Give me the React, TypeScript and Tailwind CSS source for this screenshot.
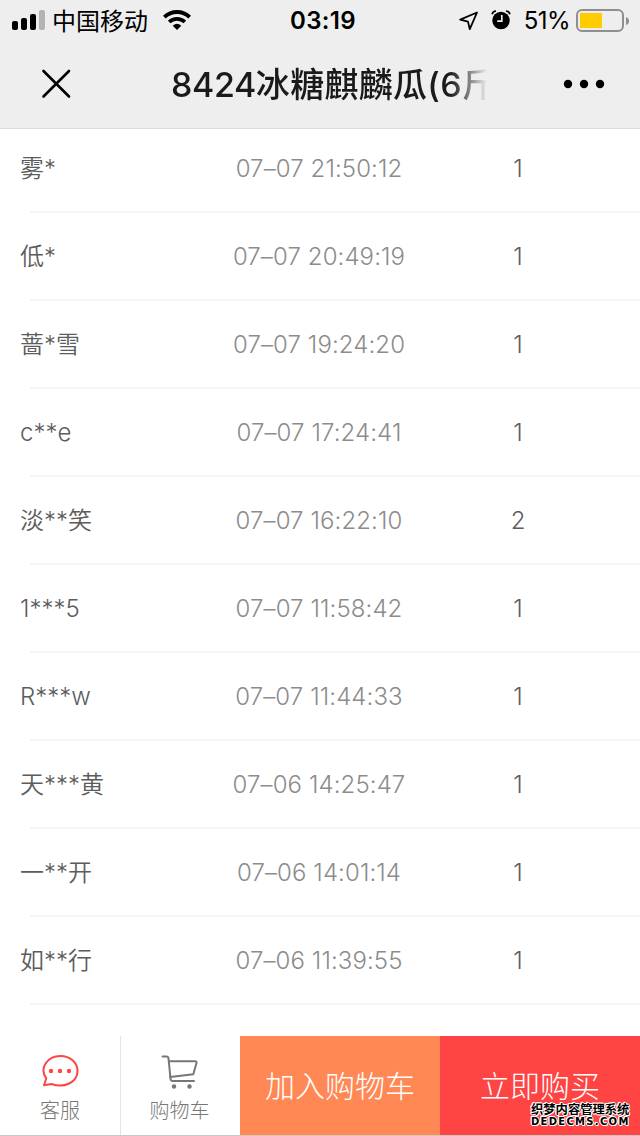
type Order = { name: string; time: string; count: number };

const orders: Order[] = [
  { name: "雾*", time: "07–07 21:50:12", count: 1 },
  { name: "低*", time: "07–07 20:49:19", count: 1 },
  { name: "蔷*雪", time: "07–07 19:24:20", count: 1 },
  { name: "c**e", time: "07–07 17:24:41", count: 1 },
  { name: "淡**笑", time: "07–07 16:22:10", count: 2 },
  { name: "1***5", time: "07–07 11:58:42", count: 1 },
  { name: "R***w", time: "07–07 11:44:33", count: 1 },
  { name: "天***黄", time: "07–06 14:25:47", count: 1 },
  { name: "一**开", time: "07–06 14:01:14", count: 1 },
  { name: "如**行", time: "07–06 11:39:55", count: 1 },
];

function StatusBar() {
  return (
    <div className="grid h-10 grid-cols-3 items-center text-black">
      <div className="flex h-10 items-center pl-3">
        <svg width="34" height="20" viewBox="0 0 34 20" className="mr-1.5">
          <rect x="0" y="11" width="6" height="9" rx="2" />
          <rect x="9" y="8" width="6" height="12" rx="2" />
          <rect x="18" y="4" width="6" height="16" rx="2" />
          <rect x="27" y="0" width="6" height="20" rx="2" fill="#b3b3b3" />
        </svg>
        <span className="pt-[3px] text-2xl leading-9">中国移动</span>
        <svg width="28" height="20" viewBox="0 0 28 20" className="ml-[15px]" fill="none" stroke="#000">
          <path d="M1.3 7.2C8.4.3 19.6.3 26.7 7.2" strokeWidth="3.9" />
          <path d="M6.2 12C10.5 7.8 17.5 7.8 21.8 12" strokeWidth="3.7" />
          <path d="M14 20 9.7 15.7Q14 12 18.3 15.7Z" fill="#000" stroke="none" />
        </svg>
      </div>
      <div className="pt-0.5 pl-1.5 text-center text-2xl leading-9 font-semibold tracking-[0.3px]">03:19</div>
      <div className="flex h-10 items-center justify-end pr-[11px]">
        <svg width="20" height="20" viewBox="0 0 20 20" className="mt-0.5" fill="none" stroke="#000" strokeWidth="1.8" strokeLinejoin="round">
          <path d="M18 1.5 1.2 8.7 9 10.6 10.8 18.2Z" />
        </svg>
        <svg width="20" height="20" viewBox="0 0 20 20" className="ml-3">
          <circle cx="10" cy="10.5" r="8.7" />
          <path d="M1 4.2Q2 1.2 5 1M19 4.2Q18 1.2 15 1" fill="none" stroke="#000" strokeWidth="1.7" />
          <path d="M10.8 5V11.2H6.2" fill="none" stroke="#eee" strokeWidth="1.7" />
        </svg>
        <span className="ml-[13px] pt-0.5 text-2xl leading-9 tracking-tight">51%</span>
        <svg width="53" height="24" viewBox="0 0 53 24" className="mt-px ml-1.5">
          <rect x="1" y="1" width="46" height="21" rx="5" fill="none" stroke="#8e8e93" strokeWidth="2" />
          <rect x="4" y="4" width="22" height="15" fill="#ffcc00" />
          <path d="M50 8Q53 9 53 12T50 16Z" fill="#8e8e93" />
        </svg>
      </div>
    </div>
  );
}

function TitleBar() {
  return (
    <div className="flex h-22 items-center">
      <svg width="30" height="30" viewBox="0 0 30 30" className="ml-[41px] shrink-0" stroke="#000" strokeWidth="2.6" strokeLinecap="round">
        <path d="M2.5 2 28 27.5M28 2 2.5 27.5" />
      </svg>
      <h1 className="ml-[100px] w-[316px] shrink-0 overflow-hidden bg-linear-to-r from-[#1a1a1a] from-88% to-[#eee] bg-clip-text pt-0.5 text-[34px] leading-[48px] font-medium whitespace-nowrap text-transparent">
        <span className="tracking-[-0.4px]">8424</span>
        <span className="tracking-[0.3px]">冰糖麒麟瓜(6斤</span>
      </h1>
      <svg width="42" height="10" viewBox="0 0 42 10" className="ml-[76px] shrink-0">
        <circle cx="5" cy="5" r="4.2" />
        <circle cx="21" cy="5" r="4.2" />
        <circle cx="37" cy="5" r="4.2" />
      </svg>
    </div>
  );
}

function OrderRow({ name, time, count }: Order) {
  return (
    <li className="h-22 shrink-0">
      <div className="grid h-[86px] grid-cols-[199px_200px_198px] items-center pt-0.5 pl-5 text-2xl font-[350] text-[#5c5c5c]">
        <span>{name}</span>
        <span className="text-center tracking-[0.1px] text-[#8c8c8c]">{time}</span>
        <span className="text-center">{count}</span>
      </div>
      <div className="ml-[30px] h-0.5 bg-[#f5f5f5]" />
    </li>
  );
}

function BottomBar() {
  return (
    <div className="flex h-[100px] border-b border-[#c8c8c8] text-[#777]">
      <div className="flex w-[121px] flex-col items-center border-r border-[#e5e5e5] pt-[18px]">
        <svg width="38" height="34" viewBox="0 0 38 34" fill="none" stroke="#ff4444" strokeWidth="2" strokeLinejoin="round">
          <path d="M5.3 24.3C-2 14.5 6 2 19.5 2C29 2 36.5 8.5 36.5 17C36.5 28.5 23 34.5 10.5 30L3 31.2Z" />
          <g fill="#ff4444" stroke="none">
            <circle cx="10" cy="17" r="2.2" />
            <circle cx="19" cy="17" r="2.2" />
            <circle cx="28" cy="17" r="2.2" />
          </g>
        </svg>
        <span className="mt-[9px] text-xl leading-7 font-light">客服</span>
      </div>
      <div className="flex w-[119px] flex-col items-center pt-[18px] pr-0.5">
        <svg width="38" height="36" viewBox="0 0 38 36" fill="none" stroke="#777" strokeWidth="2" strokeLinecap="round" strokeLinejoin="round">
          <path d="M1.5 2.5H5.5Q7.2 2.5 7.5 4.5L9.5 24.5Q9.7 27 11.5 27H33" />
          <path d="M8 7.2H34Q36 7.2 35.5 9L32.3 20.2 9.2 23" />
          <g fill="#777" stroke="none">
            <circle cx="13" cy="32.5" r="2.2" />
            <circle cx="28.5" cy="32.5" r="2.2" />
          </g>
        </svg>
        <span className="mt-[7px] text-xl leading-7 font-light">购物车</span>
      </div>
      <button className="w-[200px] bg-[#ff8855] pt-px text-[30px] font-light text-white">加入购物车</button>
      <div className="relative flex w-[200px] items-center justify-center bg-[#ff4444] pt-px text-[30px] font-light text-white">
        <button>立即购买</button>
        <div className="absolute top-[67px] left-[91px] w-[104px] font-bold text-black [text-shadow:1px_0_#fff,-1px_0_#fff,0_1px_#fff,0_-1px_#fff,1px_1px_#fff,-1px_-1px_#fff]">
          <p className="text-[12.3px] leading-[13px] whitespace-nowrap">织梦内容管理系统</p>
          <p className="font-['DejaVu_Sans',sans-serif] text-[10px] leading-3 tracking-[1.3px]">DEDECMS.COM</p>
        </div>
      </div>
    </div>
  );
}

export default function App() {
  return (
    <div className="flex h-[1136px] w-[640px] flex-col overflow-hidden bg-white font-['Inter','Noto_Sans_CJK_SC',sans-serif]">
      <header className="h-[129px] shrink-0 border-b border-[#dcdcdc] bg-[#eeeeee]">
        <StatusBar />
        <TitleBar />
      </header>
      <main className="flex-1 overflow-hidden">
        <ul className="-mt-1">
          {orders.map((order) => (
            <OrderRow key={order.time} {...order} />
          ))}
        </ul>
      </main>
      <BottomBar />
    </div>
  );
}
